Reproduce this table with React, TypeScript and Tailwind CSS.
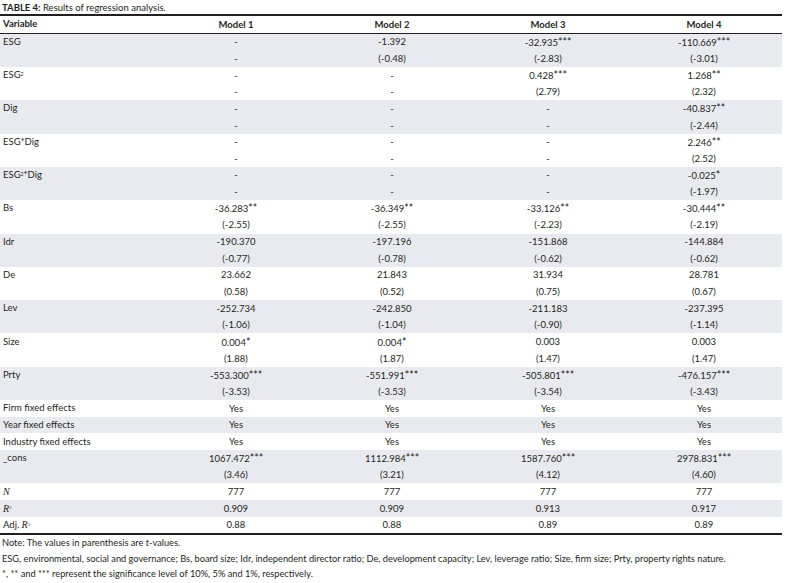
import React from "react";

type Row = {
    label: React.ReactNode;
    values: string[];
    tvalues?: string[];
};

const serif = { fontFamily: '"Liberation Serif", serif' };

const rows: Row[] = [
    { label: "ESG", values: ["-", "-1.392", "-32.935***", "-110.669***"], tvalues: ["-", "(-0.48)", "(-2.83)", "(-3.01)"] },
    { label: <>ESG<sup className="text-[5px]">2</sup></>, values: ["-", "-", "0.428***", "1.268**"], tvalues: ["-", "-", "(2.79)", "(2.32)"] },
    { label: "Dig", values: ["-", "-", "-", "-40.837**"], tvalues: ["-", "-", "-", "(-2.44)"] },
    { label: "ESG*Dig", values: ["-", "-", "-", "2.246**"], tvalues: ["-", "-", "-", "(2.52)"] },
    { label: <>ESG<sup className="text-[5px]">2</sup>*Dig</>, values: ["-", "-", "-", "-0.025*"], tvalues: ["-", "-", "-", "(-1.97)"] },
    { label: "Bs", values: ["-36.283**", "-36.349**", "-33.126**", "-30.444**"], tvalues: ["(-2.55)", "(-2.55)", "(-2.23)", "(-2.19)"] },
    { label: "Idr", values: ["-190.370", "-197.196", "-151.868", "-144.884"], tvalues: ["(-0.77)", "(-0.78)", "(-0.62)", "(-0.62)"] },
    { label: "De", values: ["23.662", "21.843", "31.934", "28.781"], tvalues: ["(0.58)", "(0.52)", "(0.75)", "(0.67)"] },
    { label: "Lev", values: ["-252.734", "-242.850", "-211.183", "-237.395"], tvalues: ["(-1.06)", "(-1.04)", "(-0.90)", "(-1.14)"] },
    { label: "Size", values: ["0.004*", "0.004*", "0.003", "0.003"], tvalues: ["(1.88)", "(1.87)", "(1.47)", "(1.47)"] },
    { label: "Prty", values: ["-553.300***", "-551.991***", "-505.801***", "-476.157***"], tvalues: ["(-3.53)", "(-3.53)", "(-3.54)", "(-3.43)"] },
    { label: "Firm fixed effects", values: ["Yes", "Yes", "Yes", "Yes"] },
    { label: "Year fixed effects", values: ["Yes", "Yes", "Yes", "Yes"] },
    { label: "Industry fixed effects", values: ["Yes", "Yes", "Yes", "Yes"] },
    { label: "_cons", values: ["1067.472***", "1112.984***", "1587.760***", "2978.831***"], tvalues: ["(3.46)", "(3.21)", "(4.12)", "(4.60)"] },
    { label: <span className="italic text-[10px]" style={serif}>N</span>, values: ["777", "777", "777", "777"] },
    { label: <span className="italic text-[10px]" style={serif}>R<sup className="text-[5px]">2</sup></span>, values: ["0.909", "0.909", "0.913", "0.917"] },
    { label: <>Adj. <span className="italic text-[10px]" style={serif}>R<sup className="text-[5px]">2</sup></span></>, values: ["0.88", "0.88", "0.89", "0.89"] },
];

// split trailing stars so they can be drawn a bit larger, as in the source
function Cell({ v }: { v: string }) {
    const m = v.match(/^(.*?)(\*+)$/);
    if (!m) return <>{v}</>;
    return (
        <>
            {m[1]}
            <span className="text-[10.5px]">{m[2]}</span>
        </>
    );
}

function Line({ label, values }: { label: React.ReactNode; values: string[] }) {
    return (
        <div className="grid grid-cols-[158px_repeat(4,1fr)] h-[16.67px] items-center">
            <div className="pl-[3px] whitespace-nowrap">{label}</div>
            {values.map((v, i) => (
                <div key={i} className="text-center whitespace-nowrap leading-none">
                    <Cell v={v} />
                </div>
            ))}
        </div>
    );
}

export default function App() {
    return (
        <div
            className="w-[787px] h-[583px] bg-white text-[#231f20] text-[9.5px] overflow-hidden"
            style={{ fontFamily: 'Lato, "Open Sans", sans-serif' }}
        >
            <div className="h-[14px] leading-[15px] pl-[2px] text-[9.5px]">
                <span className="font-bold">TABLE 4:</span> Results of regression analysis.
            </div>
            <div className="w-[782px] border-t-2 border-b-2 border-[#231f20]">
                <div className="border-b border-[#231f20] font-bold">
                    <Line label="Variable" values={["Model 1", "Model 2", "Model 3", "Model 4"]} />
                </div>
                {rows.map((r, i) => (
                    <div key={i} className={i % 2 === 0 ? "bg-[#e9eaef]" : "bg-white"}>
                        <Line label={r.label} values={r.values} />
                        {r.tvalues && <Line label="" values={r.tvalues} />}
                    </div>
                ))}
            </div>
            <div className="pl-[2px] leading-[15.5px] text-[9.25px]">
                <div>
                    Note: The values in parenthesis are <span className="italic">t</span>-values.
                </div>
                <div>
                    ESG, environmental, social and governance; Bs, board size; Idr, independent director ratio; De,
                    development capacity; Lev, leverage ratio; Size, firm size; Prty, property rights nature.
                </div>
                <div>*, ** and *** represent the significance level of 10%, 5% and 1%, respectively.</div>
            </div>
        </div>
    );
}
